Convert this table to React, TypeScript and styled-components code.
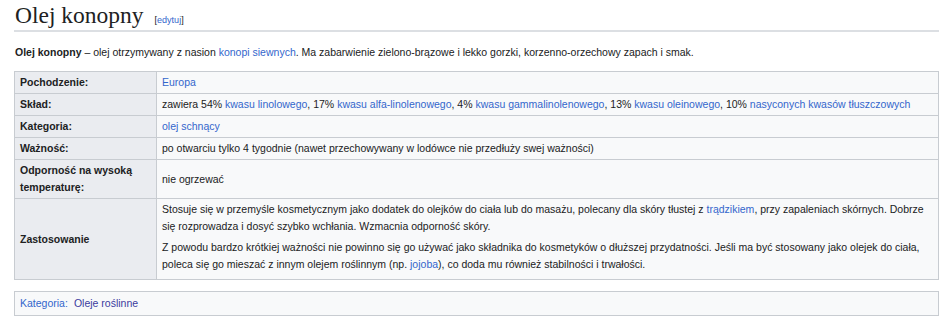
import React from "react";
import styled, { createGlobalStyle } from "styled-components";

const Global = createGlobalStyle`
  html, body { margin: 0; padding: 0; background: #fff; }
  body { font-family: "Liberation Sans", Arial, sans-serif; color: #202122; }
`;

const Page = styled.div`
  padding: 0 6px 0 14px;
`;

const Heading = styled.h1`
  margin: 0;
  padding: 2px 0 0 1px;
  display: flex;
  align-items: baseline;
  gap: 11px;
  font-family: "Liberation Serif", "Times New Roman", serif;
  font-weight: normal;
  font-size: 23.5px;
  line-height: 27px;
  height: 28px;
  border-bottom: 2px solid #dcdfe3;
`;

const EditLink = styled.span`
  font-family: "Liberation Sans", Arial, sans-serif;
  font-size: 9px;
  color: #202122;
  a { color: #3366cc; text-decoration: none; }
`;

const Lead = styled.p`
  margin: 12px 0 0 1px;
  font-size: 10.5px;
  line-height: 16px;
`;

const Link = styled.a`
  color: #3366cc;
  text-decoration: none;
`;

const Table = styled.table`
  margin-top: 11px;
  width: 100%;
  border-collapse: collapse;
  background: #f8f9fa;
  font-size: 10.5px;
  line-height: 17px;
`;

const Label = styled.th`
  width: 131px;
  text-align: left;
  font-weight: bold;
  background: #eaecf0;
  border: 1px solid #c8ccd1;
  padding: 2px 5px;
  vertical-align: middle;
`;

const Value = styled.td`
  border: 1px solid #c8ccd1;
  padding: 2px 5px;
  vertical-align: middle;
`;

const Para = styled.p`
  margin: 0 0 4px 0;
`;

const CatBox = styled.div`
  margin-top: 11px;
  border: 1px solid #c8ccd1;
  background: #f8f9fa;
  padding: 3px 5px;
  font-size: 10.5px;
  line-height: 17px;
  display: flex;
  gap: 6px;
`;

const CatLink = styled.a<{ $dark?: boolean }>`
  color: ${(p) => (p.$dark ? "#3b3b9e" : "#3366cc")};
  text-decoration: none;
`;

const rows: { label: React.ReactNode; value: React.ReactNode }[] = [
  { label: "Pochodzenie:", value: <Link>Europa</Link> },
  {
    label: "Skład:",
    value: (
      <>
        zawiera 54% <Link>kwasu linolowego</Link>, 17% <Link>kwasu alfa-linolenowego</Link>, 4%{" "}
        <Link>kwasu gammalinolenowego</Link>, 13% <Link>kwasu oleinowego</Link>, 10%{" "}
        <Link>nasyconych kwasów tłuszczowych</Link>
      </>
    ),
  },
  { label: "Kategoria:", value: <Link>olej schnący</Link> },
  {
    label: "Ważność:",
    value: "po otwarciu tylko 4 tygodnie (nawet przechowywany w lodówce nie przedłuży swej ważności)",
  },
  { label: "Odporność na wysoką temperaturę:", value: "nie ogrzewać" },
];

export default function App() {
  return (
    <>
      <Global />
      <Page>
        <Heading>
          Olej konopny
          <EditLink>
            [<a>edytuj</a>]
          </EditLink>
        </Heading>
        <Lead>
          <b>Olej konopny</b> – olej otrzymywany z nasion <Link>konopi siewnych</Link>. Ma zabarwienie
          zielono-brązowe i lekko gorzki, korzenno-orzechowy zapach i smak.
        </Lead>
        <Table>
          <tbody>
            {rows.map((r, i) => (
              <tr key={i}>
                <Label>{r.label}</Label>
                <Value>{r.value}</Value>
              </tr>
            ))}
            <tr>
              <Label>Zastosowanie</Label>
              <Value>
                <Para>
                  Stosuje się w przemyśle kosmetycznym jako dodatek do olejków do ciała lub do masażu,
                  polecany dla skóry tłustej z <Link>trądzikiem</Link>, przy zapaleniach skórnych. Dobrze
                  się rozprowadza i dosyć szybko wchłania. Wzmacnia odporność skóry.
                </Para>
                <Para>
                  Z powodu bardzo krótkiej ważności nie powinno się go używać jako składnika do kosmetyków
                  o dłuższej przydatności. Jeśli ma być stosowany jako olejek do ciała, poleca się go
                  mieszać z innym olejem roślinnym (np. <Link>jojoba</Link>), co doda mu również
                  stabilności i trwałości.
                </Para>
              </Value>
            </tr>
          </tbody>
        </Table>
        <CatBox>
          <CatLink>Kategoria:</CatLink>
          <CatLink $dark>Oleje roślinne</CatLink>
        </CatBox>
      </Page>
    </>
  );
}
